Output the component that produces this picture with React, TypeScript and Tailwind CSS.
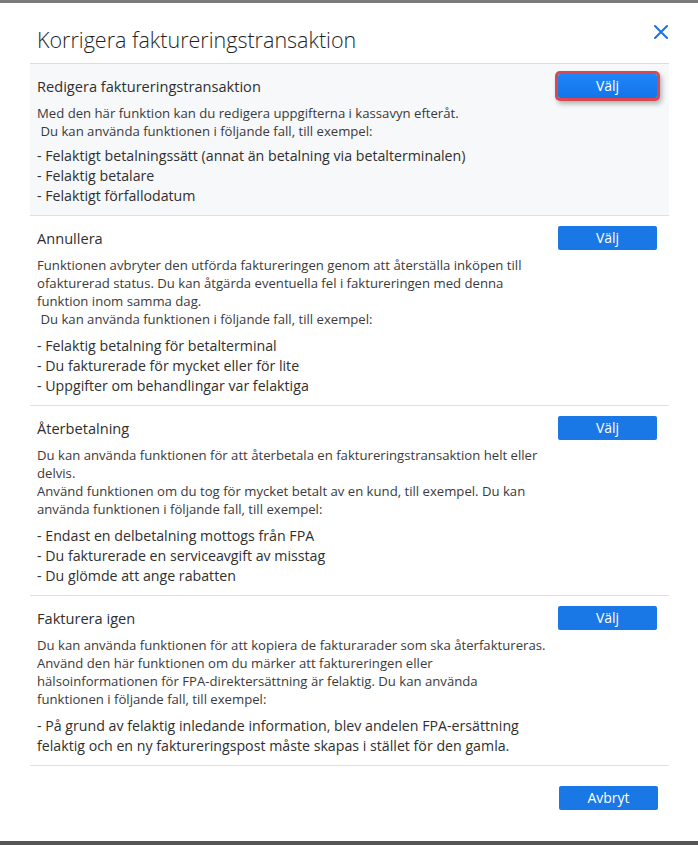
import type { ReactNode } from 'react'

type Option = {
  title: string
  body: string[]
  items: string[]
  listGap: string
  selected?: boolean
}

const options: Option[] = [
  {
    title: 'Redigera faktureringstransaktion',
    body: [
      'Med den här funktion kan du redigera uppgifterna i kassavyn efteråt.',
      '\u00a0Du kan använda funktionen i följande fall, till exempel:',
    ],
    items: [
      '- Felaktigt betalningssätt (annat än betalning via betalterminalen)',
      '- Felaktig betalare',
      '- Felaktigt förfallodatum',
    ],
    listGap: 'mt-[6px]',
    selected: true,
  },
  {
    title: 'Annullera',
    body: [
      'Funktionen avbryter den utförda faktureringen genom att återställa inköpen till',
      'ofakturerad status. Du kan åtgärda eventuella fel i faktureringen med denna',
      'funktion inom samma dag.',
      '\u00a0Du kan använda funktionen i följande fall, till exempel:',
    ],
    items: [
      '- Felaktig betalning för betalterminal',
      '- Du fakturerade för mycket eller för lite',
      '- Uppgifter om behandlingar var felaktiga',
    ],
    listGap: 'mt-[8px]',
  },
  {
    title: 'Återbetalning',
    body: [
      'Du kan använda funktionen för att återbetala en faktureringstransaktion helt eller',
      'delvis.',
      'Använd funktionen om du tog för mycket betalt av en kund, till exempel. Du kan',
      'använda funktionen i följande fall, till exempel:',
    ],
    items: [
      '- Endast en delbetalning mottogs från FPA',
      '- Du fakturerade en serviceavgift av misstag',
      '- Du glömde att ange rabatten',
    ],
    listGap: 'mt-[8px]',
  },
  {
    title: 'Fakturera igen',
    body: [
      'Du kan använda funktionen för att kopiera de fakturarader som ska återfaktureras.',
      'Använd den här funktionen om du märker att faktureringen eller',
      'hälsoinformationen för FPA-direktersättning är felaktig. Du kan använda',
      'funktionen i följande fall, till exempel:',
    ],
    items: [
      '- På grund av felaktig inledande information, blev andelen FPA-ersättning',
      'felaktig och en ny faktureringspost måste skapas i stället för den gamla.',
    ],
    listGap: 'mt-[8px]',
  },
]

function BlueButton({ children, selected }: { children: ReactNode; selected?: boolean }) {
  return (
    <button
      className={`flex h-[24px] w-[99px] shrink-0 items-center justify-center rounded-[2px] text-[14px] leading-none text-white ${
        selected
          ? 'bg-[linear-gradient(#1d86f8,#1474ea)] shadow-[0_0_0_3px_#d8484c,2px_3px_5px_3px_rgba(0,0,0,0.28)]'
          : 'bg-[#1a77e6]'
      }`}
      type="button"
    >
      {children}
    </button>
  )
}

function CloseIcon() {
  return (
    <svg aria-hidden="true" className="h-[14px] w-[14px]" fill="none" stroke="#1a73e0" strokeWidth={2} viewBox="0 0 14 14">
      <path d="M1 1l12 12M13 1L1 13" strokeLinecap="round" />
    </svg>
  )
}

function OptionRow({ option }: { option: Option }) {
  return (
    <section
      className={`border-b border-[#e0e0e0] pb-[9px] pl-[7px] pr-[12px] pt-[10px] ${option.selected ? 'bg-[#f7f8fa]' : ''}`}
    >
      <div className="flex h-[24px] items-center justify-between">
        <h2 className="text-[14.6px] leading-[20px] text-[#2f2f2f]">{option.title}</h2>
        <BlueButton selected={option.selected}>Välj</BlueButton>
      </div>
      <div className="mt-[6px] text-[13.15px] leading-[18px] text-[#3a3a3a]">
        {option.body.map((line, i) => (
          <p className="whitespace-pre" key={i}>
            {line}
          </p>
        ))}
      </div>
      <ul className={`${option.listGap} text-[14.2px] leading-[20px] text-[#2f2f2f]`}>
        {option.items.map((item, i) => (
          <li className="whitespace-pre" key={i}>
            {item}
          </li>
        ))}
      </ul>
    </section>
  )
}

export default function App() {
  return (
    <div className="flex h-[845px] flex-col bg-white font-['Open_Sans',sans-serif]">
      <div className="h-[3px] bg-[#7b7b7b]" />
      <div className="flex-1 pl-[30px] pr-[29px]">
        <header className="flex items-start justify-between border-b border-[#dcdcdc] pb-[8px] pl-[7px] pt-[22px]">
          <h1 className="text-[21.5px] font-light leading-[30px] text-[#1f1f1f]">Korrigera faktureringstransaktion</h1>
          <button className="mr-[1px] mt-[0px]" type="button">
            <CloseIcon />
          </button>
        </header>
        {options.map((option) => (
          <OptionRow key={option.title} option={option} />
        ))}
        <div className="flex justify-end pr-[11px] pt-[20px]">
          <BlueButton>Avbryt</BlueButton>
        </div>
      </div>
      <div className="h-[4px] bg-[#555555]" />
    </div>
  )
}
